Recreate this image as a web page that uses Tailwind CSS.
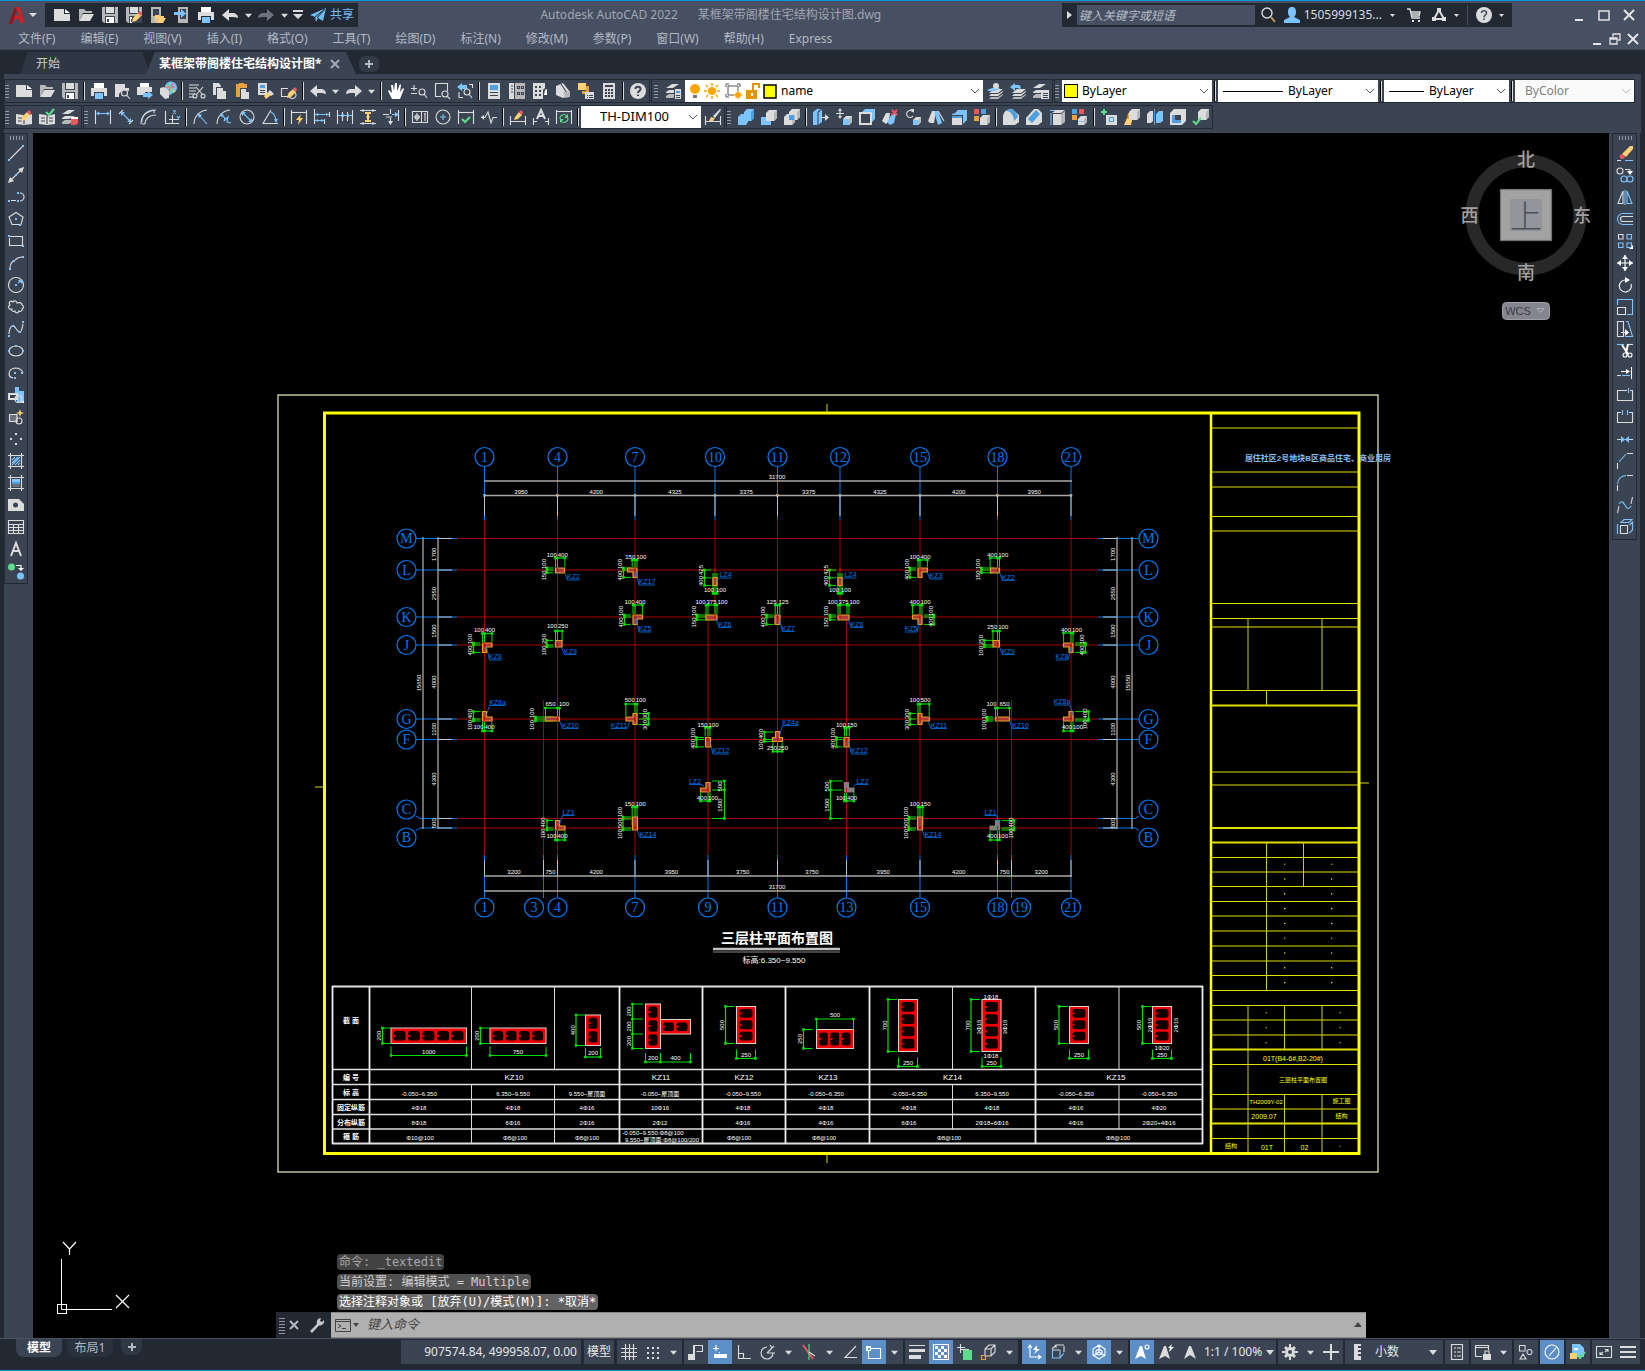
<!DOCTYPE html>
<html lang="zh-CN">
<head>
    <meta charset="UTF-8">
    <meta name="viewport" content="width=device-width, initial-scale=1.0">
    <title>Autodesk AutoCAD 2022 - 某框架带阁楼住宅结构设计图.dwg</title>
    <script src="https://cdn.jsdelivr.net/npm/@tailwindcss/browser@4"></script>
</head>
<body class="min-h-screen flex flex-col bg-[#222933] text-[#b4bac4] text-xs font-['Noto_Sans','Noto_Sans_CJK_SC',sans-serif] border-y border-[#0a96d9] overflow-x-hidden">

    <!-- title bar -->
    <header class="bg-[#474f62] border-b border-[#3b4453]">
        <div class="h-[26px] flex items-end">
            <button aria-label="应用程序菜单" class="w-[45px] h-6 flex items-center pl-[9px] gap-1">
                <svg class="w-4 h-[17px]" viewBox="0 0 16 17"><path fill="#c8242b" d="M0 17L6 0H11L16 16H11L10 12L5 13L3 17ZM6 9L10 8L8 3Z"/><path fill="#8e161b" d="M6 0L0 17H3L8 3Z"/></svg>
                <svg class="w-2 h-2" viewBox="0 0 8 8"><path fill="#ddd" d="M0 2H8L4 6Z"/></svg>
            </button>
            <div class="h-6 bg-[#222933] flex items-center pl-[5px] pr-[4px]">
                <div class="flex" data-tools="new open save saveas mopen msave print undo v redooff v" data-size="qat"></div>
                <button aria-label="自定义" class="w-4 h-6 flex items-center justify-center"><svg class="w-2.5 h-2.5" viewBox="0 0 10 10"><path fill="#dcdcdc" d="M0 0H10V2H0ZM0 4H10L5 9Z"/></svg></button>
                <button class="flex items-center gap-1 pl-1 text-[#6fbcf5]">
                    <svg class="w-4 h-4" viewBox="0 0 16 16"><path fill="#6fbcf5" d="M0 8L16 1L13 14L8 11L6 15L5 10Z"/><path stroke="#222933" fill="none" d="M5 10L15 2L7 11"/></svg>共享
                </button>
            </div>
            <div class="flex-1 h-6 flex items-center justify-center gap-5 text-[#a1a7b2] pl-0.5"><span>Autodesk AutoCAD 2022</span><span>某框架带阁楼住宅结构设计图.dwg</span></div>
            <div class="h-6 bg-[#222933] flex items-center text-[#d8dbe0]">
                <svg class="w-[15px] h-3 px-[4px]" viewBox="0 0 7 12"><path fill="#dcdcdc" d="M1 2L6 6L1 10Z"/></svg>
                <input aria-label="搜索" placeholder="键入关键字或短语" class="w-[178px] h-5 px-0.5 bg-[#474f62] italic placeholder-[#b9bec8] outline-none">
                <button aria-label="搜索按钮" class="w-[26px] flex justify-center"><svg class="w-4 h-4" viewBox="0 0 16 16"><circle cx="7" cy="6" r="5" fill="none" stroke="#dcdcdc" stroke-width="1.4"/><path stroke="#c89a5a" stroke-width="2" d="M11 10L15 15"/></svg></button>
                <button class="flex items-center gap-1 pl-[3px]"><svg class="w-4 h-4" viewBox="0 0 16 16"><path fill="#7cc4ff" d="M8 0C11 0 12 2 12 5C12 8 11 9 10 10L16 13V16H0V13L6 10C5 9 4 8 4 5C4 2 5 0 8 0Z"/></svg>1505999135...<svg class="w-3 h-2" viewBox="0 0 12 8"><path fill="#dcdcdc" d="M4 3H9L6.500 6Z"/></svg></button>
                <button aria-label="购物车" class="w-[26px] flex justify-end pr-[2px]"><svg class="w-4 h-4" viewBox="0 0 16 16"><path fill="none" stroke="#dcdcdc" stroke-width="1.4" d="M1 2H4L6 11H14M5 5H14L13 9H6M5 7H13"/><path fill="#dcdcdc" d="M6 13H8V15H6ZM12 13H14V15H12Z"/></svg></button>
                <button aria-label="Autodesk App" class="flex items-center pl-[7px]"><svg class="w-4 h-4" viewBox="0 0 16 16"><path fill="none" stroke="#dcdcdc" stroke-width="2" d="M8 3L3 12H13Z"/><path fill="#dcdcdc" d="M6 1H10V5H6ZM1 10H5V14H1ZM11 10H15V14H11Z"/></svg><svg class="w-3 h-2 ml-1" viewBox="0 0 12 8"><path fill="#dcdcdc" d="M3 3H8L5.500 6Z"/></svg></button>
                <span class="w-px h-5 bg-[#474f62] ml-1"></span>
                <button aria-label="帮助" class="flex items-center pl-2 pr-1"><svg class="w-4 h-4" viewBox="0 0 16 16"><circle cx="8" cy="8" r="8" fill="#dcdcdc"/><path fill="none" stroke="#474f62" stroke-width="1.600" d="M5.500 6C5.500 3 10.500 3 10.500 6C10.500 8 8 8 8 10.500M8 11.500V13"/></svg><svg class="w-3 h-2 ml-1" viewBox="0 0 12 8"><path fill="#dcdcdc" d="M3 3H8L5.500 6Z"/></svg></button>
            </div>
            <div class="h-6 flex items-center pl-[54px] pr-1">
                <button aria-label="最小化" class="w-[25px] h-4 flex items-center justify-center"><svg class="w-3 h-3" viewBox="0 0 12 12"><path fill="#e4e4e4" d="M2 10H10V12H2Z"/></svg></button>
                <button aria-label="最大化" class="w-[25px] h-4 flex items-center justify-center"><svg class="w-3 h-3" viewBox="0 0 12 12"><path fill="none" stroke="#e4e4e4" stroke-width="1.500" d="M1 2H11V11H1Z"/></svg></button>
                <button aria-label="关闭" class="w-[25px] h-4 flex items-center justify-center"><svg class="w-3 h-3" viewBox="0 0 12 12"><path stroke="#e4e4e4" stroke-width="2" d="M1 1L11 11M11 1L1 11"/></svg></button>
            </div>
        </div>
        <nav class="h-[22px] flex items-center gap-[25px] pl-[18px] pr-1.5 pt-0.5">
            <a href="#">文件(F)</a><a href="#">编辑(E)</a><a href="#">视图(V)</a><a href="#">插入(I)</a><a href="#">格式(O)</a><a href="#">工具(T)</a><a href="#">绘图(D)</a><a href="#">标注(N)</a><a href="#">修改(M)</a><a href="#">参数(P)</a><a href="#">窗口(W)</a><a href="#">帮助(H)</a><a href="#">Express</a>
            <div class="ml-auto flex gap-1.5">
                <button aria-label="最小化图形"><svg class="w-3 h-3" viewBox="0 0 12 12"><path fill="#e4e4e4" d="M2 10H10V12H2Z"/></svg></button>
                <button aria-label="还原图形"><svg class="w-3 h-3" viewBox="0 0 12 12"><path fill="none" stroke="#e4e4e4" stroke-width="1.300" d="M4 4V1H11V7H9M1 5H8V11H1ZM1 6H8"/></svg></button>
                <button aria-label="关闭图形"><svg class="w-3 h-3" viewBox="0 0 12 12"><path stroke="#e4e4e4" stroke-width="2" d="M1 1L11 11M11 1L1 11"/></svg></button>
            </div>
        </nav>
    </header>

    <!-- file tabs -->
    <div class="h-6 flex items-end pl-5 shrink-0">
        <button class="w-[130px] h-[22px] bg-[#2f3744] text-left pl-4 pt-0.5 text-[#c9cdd4] [clip-path:polygon(8px_0,122px_0,130px_100%,0_100%)]">开始</button>
        <div class="-ml-1 w-[210px] h-[22px] bg-[#3b4453] flex items-center pl-[13px] pt-0.5 gap-2 text-white font-bold [clip-path:polygon(9px_0,200px_0,210px_100%,0_100%)]">
            <button class="whitespace-nowrap">某框架带阁楼住宅结构设计图*</button>
            <button aria-label="关闭选项卡"><svg class="w-2.5 h-2.5" viewBox="0 0 10 10"><path stroke="#a5abb5" stroke-width="2" d="M1 1L9 9M9 1L1 9"/></svg></button>
        </div>
        <button aria-label="新图形" class="ml-[3px] mb-0.5 w-5 h-4 rounded-md bg-[#323a47] flex items-center justify-center"><svg class="w-2 h-2" viewBox="0 0 8 8"><path fill="#b4bac4" d="M3 0H5V3H8V5H5V8H3V5H0V3H3Z"/></svg></button>
    </div>

    <!-- docked toolbars -->
    <div class="bg-[#3b4453] mx-1 pt-[5px] pb-1 flex flex-col gap-0.5 shrink-0">
        <div class="h-6 flex gap-px pr-[6px]">
            <div class="flex items-center border border-[#222933]">
                <span class="w-1 h-[15px] mr-[3px] bg-[radial-gradient(#9aa0aa_35%,transparent_40%)] bg-[length:2px_3px]"></span>
                <div class="flex" data-tools="new open save | print preview publish globe | cut copy paste match bedit | undo v redo v | pan zoomrt zoomwin zoomprev | props dcenter palette sheet markup calc | help"></div>
            </div>
            <div class="flex items-center border border-[#222933] pl-0.5">
                <span class="w-1 h-[15px] mr-1 bg-[radial-gradient(#9aa0aa_35%,transparent_40%)] bg-[length:2px_3px]"></span>
                <div class="flex" data-tools="layers"></div>
                <div class="relative w-[298px] h-[22px] bg-white flex items-center text-black pl-1">
                    <svg class="w-[92px] h-4 shrink-0" viewBox="0 0 92 16"><circle cx="6" cy="6" r="5" fill="#ffa500"/><path fill="#777" d="M4 12H8V15H4Z"/><circle cx="23" cy="8" r="4" fill="#ffa500"/><path stroke="#ffa500" stroke-width="1.500" d="M23 0V3M23 13V16M15 8H18M28 8H31M17 2L19 4M27 12L29 14M29 2L27 4M19 12L17 14"/><path fill="none" stroke="#555" d="M39 3H49V8M39 3V12H45M37 1H40M37 1V4M48 1H51V4M37 11V14H40"/><circle cx="49" cy="12" r="3" fill="#ffa500"/><path stroke="#ffa500" d="M49 7V17M44 12H54"/><path fill="#e69500" d="M57 7H68V16H57Z"/><path fill="none" stroke="#e69500" stroke-width="2" d="M64 7V1H70V5"/><path fill="#fff" d="M62 10H64V13H62Z"/><path fill="#ff0" stroke="#000" stroke-width="1.500" d="M75 2H87V15H75Z"/></svg>
                    <select aria-label="图层" class="flex-1 appearance-none bg-transparent outline-none"><option>name</option></select>
                    <svg class="absolute right-1 w-2 h-2 pointer-events-none" viewBox="0 0 8 8"><path fill="none" stroke="#555" d="M0 2L4 6L8 2"/></svg>
                </div>
                <div class="flex" data-tools="laycur layprev laystate"></div>
            </div>
            <div class="flex-1 flex items-center border border-[#222933]">
                <span class="w-1 h-[15px] mr-[3px] bg-[radial-gradient(#9aa0aa_35%,transparent_40%)] bg-[length:2px_3px]"></span>
                <div class="relative w-[150px] h-[22px] bg-white flex items-center text-black pl-0.5">
                    <span class="w-3.5 h-3.5 bg-[#ff0] border border-black"></span>
                    <select aria-label="颜色" class="flex-1 appearance-none bg-transparent outline-none pl-1"><option>ByLayer</option></select>
                    <svg class="absolute right-1 w-2 h-2 pointer-events-none" viewBox="0 0 8 8"><path fill="none" stroke="#555" d="M0 2L4 6L8 2"/></svg>
                </div>
                <span class="w-px h-5 mx-[2px] bg-[#dcdcdc] border-l border-black box-content"></span>
                <div class="relative w-[160px] h-[22px] bg-white flex items-center text-black pl-[5px]">
                    <span class="w-[60px] h-px bg-black"></span>
                    <select aria-label="线型" class="flex-1 appearance-none bg-transparent outline-none pl-[5px]"><option>ByLayer</option></select>
                    <svg class="absolute right-1 w-2 h-2 pointer-events-none" viewBox="0 0 8 8"><path fill="none" stroke="#555" d="M0 2L4 6L8 2"/></svg>
                </div>
                <span class="w-px h-5 mx-[2px] bg-[#dcdcdc] border-l border-black box-content"></span>
                <div class="relative w-[125px] h-[22px] bg-white flex items-center text-black pl-[5px]">
                    <span class="w-[35px] h-px bg-black"></span>
                    <select aria-label="线宽" class="flex-1 appearance-none bg-transparent outline-none pl-[5px]"><option>ByLayer</option></select>
                    <svg class="absolute right-1 w-2 h-2 pointer-events-none" viewBox="0 0 8 8"><path fill="none" stroke="#555" d="M0 2L4 6L8 2"/></svg>
                </div>
                <span class="w-px h-5 mx-[2px] bg-[#dcdcdc] border-l border-black box-content"></span>
                <div class="relative flex-1 h-[22px] bg-[#fafafa] flex items-center">
                    <select aria-label="打印样式" disabled class="flex-1 appearance-none bg-transparent outline-none pl-2.5 text-[#808080]"><option>ByColor</option></select>
                    <svg class="absolute right-1 w-2 h-2 pointer-events-none" viewBox="0 0 8 8"><path fill="none" stroke="#bbb" d="M0 2L4 6L8 2"/></svg>
                </div>
            </div>
        </div>
        <div class="h-6 flex gap-px">
            <div class="flex items-center border border-[#222933]">
                <span class="w-1 h-[15px] mr-[3px] bg-[radial-gradient(#9aa0aa_35%,transparent_40%)] bg-[length:2px_3px]"></span>
                <div class="flex" data-tools="refedit refsave erasel"></div>
            </div>
            <div class="flex items-center border border-[#222933]">
                <span class="w-1 h-[15px] mr-[3px] bg-[radial-gradient(#9aa0aa_35%,transparent_40%)] bg-[length:2px_3px]"></span>
                <div class="flex" data-tools="dlin dali darc dord | drad djog ddia dang | qdim dbase dcont dspace dbreak | tol cmark inspect jogl | dedit dtedit dupd |"></div>
                <div class="relative w-[120px] h-[22px] bg-white flex items-center text-black">
                    <select aria-label="标注样式" class="w-full appearance-none bg-transparent outline-none pl-[19px] text-[13px]"><option>TH-DIM100</option></select>
                    <svg class="absolute right-1 w-2 h-2 pointer-events-none" viewBox="0 0 8 8"><path fill="none" stroke="#555" d="M0 2L4 6L8 2"/></svg>
                </div>
                <div class="flex" data-tools="dstyle"></div>
            </div>
            <div class="flex items-center border border-[#222933]">
                <span class="w-1 h-[15px] mr-[3px] bg-[radial-gradient(#9aa0aa_35%,transparent_40%)] bg-[length:2px_3px]"></span>
                <div class="flex" data-tools="union subtract intersect | extrude fmove foffset fdel frot taper fcopy fcolor | filletE chamE copyE colorE | imprint clean separate shell check"></div>
            </div>
        </div>
    </div>

    <!-- drawing area between the two tool palettes -->
    <main class="flex-1 flex mx-1 bg-[#3b4453] border-r border-[#222933]">
        <div class="w-[29px] shrink-0">
            <div class="w-6 border border-[#222933] flex flex-col items-center pt-0.5 pb-px">
                <span class="h-1 w-3.5 mb-[2px] bg-[radial-gradient(#9aa0aa_35%,transparent_40%)] bg-[length:3px_2px]"></span>
                <div class="flex flex-col" data-size="side" data-tools="line xline pline polygon rect arc circle cloud spline ellipse elarc insert block point hatch grad region table text add"></div>
            </div>
        </div>
        <div class="relative flex-1 bg-black overflow-hidden">
            <svg id="drawing" class="absolute inset-0 w-full h-full" viewBox="33 133 1576 1205" font-family="Liberation Sans, Noto Sans CJK SC, sans-serif"></svg>
            <div class="absolute left-[304px] bottom-[28px] flex flex-col items-start gap-1 text-xs font-['DejaVu_Sans_Mono','Noto_Sans_CJK_SC',monospace]">
                <p class="h-4 leading-4 px-0.5 rounded-sm bg-[#424242] text-[#a9a9a9] whitespace-pre">命令: _textedit</p>
                <p class="h-4 leading-4 px-0.5 rounded-sm bg-[#505050] text-[#cfcfcf] whitespace-pre">当前设置: 编辑模式 = Multiple</p>
                <p class="h-4 leading-4 px-0.5 rounded-sm bg-[#636363] text-white whitespace-pre">选择注释对象或 [放弃(U)/模式(M)]: *取消*</p>
            </div>
            <div class="absolute inset-x-[243px] bottom-0 h-[26px] flex items-center bg-[#222933]">
                <span class="w-1.5 h-[17px] ml-[3px] mr-1 bg-[radial-gradient(#9aa0aa_35%,transparent_40%)] bg-[length:2px_3px]"></span>
                <button aria-label="关闭命令行"><svg class="w-2.5 h-2.5" viewBox="0 0 10 10"><path stroke="#b4bac4" stroke-width="2" d="M1 1L9 9M9 1L1 9"/></svg></button>
                <button aria-label="自定义命令行" class="ml-2.5 mr-1.5"><svg class="w-4 h-4" viewBox="0 0 16 16"><path fill="#c4c8ce" d="M1 14L8 7C7 4 9 1 12 1L11 4L13 5L15 3C16 6 13 9 10 8.500L3 16Z"/></svg></button>
                <label class="flex-1 h-full flex items-center bg-[#b0b0b0] border-y border-[#888] pl-1 pr-1 gap-1 text-[#333]">
                    <svg class="w-6 h-4 shrink-0" viewBox="0 0 24 16"><path fill="none" stroke="#444" d="M.5 2.500H15.500V14.500H.5ZM.5 4.500H15.500M3 7L6 9L3 11M7 11.500H11"/><path fill="#444" d="M18 6H24L21 10Z"/></svg>
                    <input aria-label="命令" placeholder="键入命令" class="flex-1 bg-transparent outline-none italic text-[13px] placeholder-[#444] pl-1">
                    <svg class="w-2 h-2" viewBox="0 0 8 8"><path fill="#444" d="M0 6H8L4 1Z"/></svg>
                </label>
            </div>
        </div>
        <div class="w-[31px] shrink-0 pl-[3px]">
            <div class="w-[25px] border border-[#222933] flex flex-col items-center pt-0.5 pb-px">
                <span class="h-1 w-3.5 mb-[2px] bg-[radial-gradient(#9aa0aa_35%,transparent_40%)] bg-[length:3px_2px]"></span>
                <div class="flex flex-col" data-size="side" data-tools="erase copyobj mirror offset array move rotate scale stretch trim extend breakpt break join chamfer fillet blend explode"></div>
            </div>
        </div>
    </main>

    <!-- layout tabs and status bar -->
    <footer class="h-8 shrink-0 flex items-start border-t border-[#4a5160] pr-[5px]">
        <button class="ml-4 w-[46px] h-[18px] rounded-b-lg bg-[#3b4453] text-white font-bold">模型</button>
        <button class="ml-[5px] w-[46px] h-[18px] rounded-b-lg bg-[#29313c]">布局1</button>
        <button aria-label="新建布局" class="ml-2 w-[21px] h-4 rounded-b-lg bg-[#2f3744] flex items-center justify-center"><svg class="w-2 h-2" viewBox="0 0 8 8"><path fill="#b4bac4" d="M3 0H5V3H8V5H5V8H3V5H0V3H3Z"/></svg></button>
        <div class="ml-auto mt-px flex h-6 gap-[2px] text-[#e6e6e6]">
            <span class="bg-[#3b4453] w-[180px] pr-1 text-right leading-6">907574.84, 499958.07, 0.00</span>
            <button class="bg-[#3b4453] w-[30px] mx-px">模型</button>
            <div class="bg-[#3b4453] flex" data-size="status" data-tools="sgrid sdots v"></div>
            <div class="bg-[#3b4453] flex" data-size="status" data-tools="infer *dyn ortho polar v iso v angle *osnap v"></div>
            <div class="bg-[#3b4453] flex mr-0.5" data-size="status" data-tools="lwt *transp cycle osnap3 v"></div>
            <div class="bg-[#3b4453] flex" data-size="status" data-tools="*ducs filter v *gizmo v"></div>
            <div class="bg-[#3b4453] flex" data-size="status" data-tools="*ann1 ann2 ann3"></div>
            <button class="bg-[#3b4453] -ml-[2px] w-[74px] flex items-center justify-center gap-1 whitespace-nowrap">1:1 / 100%<svg class="w-2 h-2" viewBox="0 0 8 8"><path fill="#dcdcdc" d="M0 2H8L4 7Z"/></svg></button>
            <div class="bg-[#3b4453] flex" data-size="status" data-tools="gear v plus"></div>
            <button class="bg-[#3b4453] w-[98px] flex items-center pl-1"><svg class="w-4 h-4 mr-2.5" viewBox="0 0 16 16"><path fill="#dcdcdc" d="M5 0H12V2H9V4H12V6H9V8H12V10H9V12H12V14H12V16H5Z"/></svg>小数<svg class="ml-auto mr-1.5 w-2 h-2" viewBox="0 0 8 8"><path fill="#dcdcdc" d="M0 2H8L4 7Z"/></svg></button>
            <div class="bg-[#3b4453] flex" data-size="status" data-tools="qprop"></div>
            <div class="bg-[#3b4453] flex" data-size="status" data-tools="lock v"></div>
            <div class="bg-[#3b4453] flex" data-size="status" data-tools="isolate"></div>
            <div class="bg-[#3b4453] flex" data-size="status" data-tools="*perf"></div>
            <div class="bg-[#3b4453] flex" data-size="status" data-tools="cad"></div>
            <div class="bg-[#3b4453] flex" data-size="status" data-tools="full menu"></div>
        </div>
    </footer>

    <script>
        // F = fill, S = 1px stroke, T = 2px stroke; second letter picks the colour
        const COLORS = { w: "#dcdcdc", W: "#ffffff", x: "#b8b8b8", b: "#7cc4ff", B: "#4d9fe0", y: "#ffcf70", r: "#f0555c", g: "#5fdc8b", k: "#3b4453", d: "#6b717c", o: "#e8a040" };
        const floppy = "Fx M0 0H16V16H2L0 14Z|Fk M3 0H13V7H3Z|Fw M4 0H12V6H4Z|Fk M3 9H13V16H3Z|FW M4 10H12V16H4Z|Fk M5 12H7V15H5Z";
        const pencil = "|Fy M6 15L7 11L12 6L15 9L10 14Z|Fr M12 6L14 4L16 6L15 9Z";
        const stack = "Fw M0 5L6 1H13L7 5Z|Fw M0 9L3 7H13L7 10H0Z|Fx M0 13L3 11H13L7 15H0Z";
        const stackR = "Fw M2 10L7 6H16L11 10Z|Fw M2 13L4 11H11L16 8V9L11 13Z|Fx M2 16L4 14H11L16 11V12L11 16Z";
        const dim = "Sw M.5 1V15M15.500 1V15";
        const box = (x, y, s, c) => `F${c} M${x} ${y + 3}L${x + 3} ${y}H${x + s}V${y + s - 3}L${x + s - 3} ${y + s}H${x}Z|Fx M${x + s - 3} ${y + 3}L${x + s} ${y}V${y + s - 3}L${x + s - 3} ${y + s}Z`;
        const ICONS = {
            new: "Fw M0 2H10V7H16V14H0Z|FW M11 2L16 6H11Z",
            open: "Fx M1 14V2H6L8 4H14V6H5Z|Fw M5 7H16L12 14H1Z",
            save: floppy, saveas: floppy + "|Fk M6 16V9H16V16Z" + pencil,
            mopen: "Fx M1 0H11V16H1Z|Fk M3 2H9V9H3Z|Fy M5 15V8H9L10 9H14V11H8Z|Fy M9 11H16L13 16H6Z",
            msave: "Fx M4 0H14V16H4Z|Fk M6 2H12V12H6Z|Fb M0 5H7V2L12 6.500L7 11V8H0Z",
            print: "FW M3 0H13V5H3Z|Fw M0 5H16V13H13V9H3V13H0Z|Fb M4 10H12V16H4Z",
            preview: "Fw M1 1H11V5H15V8L9 7L5 11V14H1Z|Sw M13.500 10A3 3 0 1 1 7.500 10A3 3 0 1 1 13.500 10M12.500 12L16 16",
            publish: "FW M3 0H12V4H3Z|Fw M0 4H15V9H8V12H0Z|Fb M6 10H11V8L16 12L11 16V14H6Z",
            globe: "Fb M5 5A6 6 0 1 1 15 9L8 13Z|Sy M6 3L15 9|Sr M13 0L8 9M15 4H6|Sg M8 1Q14 6 11 11|Fw M0 5L4 4L9 8V15L5 16L0 11Z",
            cut: "Sw M0 2H10M0 5H7M0 8H7M0 11H6|Sw M0 14H5|Sw M7 4L14 12M14 4L7 12|Sw M8 13A2 2 0 1 1 4 13A2 2 0 1 1 8 13M16 13A2 2 0 1 1 12 13A2 2 0 1 1 16 13",
            copy: "Fw M1 0H7L9 3V4H4V12H1Z|Fw M5 5H11V8H14V16H5Z",
            paste: "Fo M1 1H4V0H9V1H12V5H5V14H1Z|Fw M6 6H11V9H14V16H6Z",
            match: "Fw M0 0H9V12H0Z|FB M2 2H7V5H2Z|Fk M2 7H7V8H2ZM2 9H7V10H2Z|Fy M8 16L6 13L10 9L13 12Z|Fw M10 9L12 7L16 11L13 13Z",
            bedit: "Sw M0 5.500H7M.5 5V13.500H8|Sw M15 12A3.500 3.500 0 1 1 8 12A3.500 3.500 0 1 1 15 12" + pencil,
            undo: "Fw M0 8L7 2V6H10C14 6 16 8 16 11C14 10 12 10 10 10H7V14Z",
            redo: "Fw M16 8L9 2V6H6C2 6 0 8 0 11C2 10 4 10 6 10H9V14Z",
            redooff: "Fd M16 8L9 2V6H6C2 6 0 8 0 11C2 10 4 10 6 10H9V14Z",
            pan: "FW M4 16L0 8L1 7L4 10L3 2L5 2L6 8L7 0H9L9 8L12 1L13 2L12 9L15 5L16 6L12 16Z",
            zoomrt: "Sw M0 5.500H6M3 2V8M0 10.500H6|Sw M14 9A3 3 0 1 1 8 9A3 3 0 1 1 14 9M13 11L16 15",
            zoomwin: "Sw M1 .5H13.500V8M7 13.500H1.500V0|Sw M14 11A3 3 0 1 1 8 11A3 3 0 1 1 14 11M13 13L16 16",
            zoomprev: "Fb M0 4L5 0V2H10V6H5V8Z|Sw M12 1.500H15.500V5M2 9V14.500H6|Sw M13 9A3 3 0 1 1 7 9A3 3 0 1 1 13 9M12 11L15 15",
            props: "Fw M2 0H14V16H2Z|FB M4 2H12V7H4Z|Fk M4 9H12V10H4ZM4 12H12V13H4Z",
            dcenter: "Fw M0 0H5V16H0Z|Fx M6 0H16V16H6Z|Sk M2 3H4M2 6H4M2 9H4M8.500 3.500H10.500V5.500H8.500ZM12.500 3.500H14.500V5.500H12.500ZM8.500 9.500H10.500V11.500H8.500ZM12.500 9.500H14.500V11.500H12.500Z",
            palette: "Fw M1 0H13V5L11 7V16H1Z|Fk M3 3H5V5H3ZM7 3H9V5H7ZM3 7H5V9H3ZM7 7H9V9H7ZM3 11H5V13H3ZM7 11H9V13H7Z|FW M13 7L15 6V12H12Z",
            sheet: "Fw M1 3L8 0L15 9V12L8 15L1 12Z|Sk M6 1L14 13M9 10L15 12|Fx M9 10L15 8V14L10 15Z",
            markup: "Fy M0 0H8V7H0Z|Fo M8 3H11V11H4V8H8Z|Fw M7 9H16V16H7Z|Sk M9 12.500H10M11 12.500H15M9 14.500H10M11 14.500H15",
            calc: "Fw M2 0H14V16H2Z|Fk M4 2H12V4H4ZM4 6H6V8H4ZM7 6H9V8H7ZM10 6H12V8H10ZM4 9H6V11H4ZM7 9H9V11H7ZM10 9H12V11H10ZM4 12H6V14H4ZM7 12H9V14H7ZM10 12H12V14H10Z",
            help: "Fw M16 8A8 8 0 1 1 0 8A8 8 0 1 1 16 8|Tk M5.500 6C5.500 3 10.500 3 10.500 6C10.500 8 8 8 8 10M8 11.500V13",
            layers: stack + "|Fk M8 6H16V16H8Z|Fw M9 6H15V16H9Z|FB M10 8H14V10H10Z|Sk M10 12.500H14M10 14.500H14",
            laycur: stackR + "|Fb M0 7L5 5H13L9 8H2Z|Fw M12 3A3 3 0 1 1 6 3A3 3 0 1 1 12 3",
            layprev: stackR + "|Fb M0 4L5 0V2H9C11 3 11 5 10 7C9 5 8 5 5 5V8Z",
            laystate: stack + "|Fk M8 6H16V16H8Z|Fw M8 7H16V16H8Z|Sk M10 10.500H15M10 12.500H15M10 14.500H15",
            refedit: "Fw M0 5L7 6L8 7L16 5V15L8 16L0 15Z|Sk M8 7V15M2 9H6M2 12H6|Fy M5 12L6 8L11 3L14 6L9 11Z|Fr M11 3L13 1L15 3L14 6Z",
            refsave: "Fw M0 5L7 6L8 7L16 5V15L8 16L0 15Z|Sk M8 7V15M2 9H6M2 12H6M10 9H14M10 12H14|Tg M7 3L10 6L15 0",
            erasel: stack + "|Fr M9 9L10 8H16V14L14 16H9Z|FW M9 8H16V10H9Z",
            dlin: dim + "|Sb M2 4.500H14|Fb M1 4.500L4 2.500V6.500ZM15 4.500L12 2.500V6.500Z",
            dali: "Sw M1 5L5 1M11 15L15 11|Sb M3 3L13 13|Fb M3 3H7L3 7ZM13 13V9L9 13Z",
            darc: "Sw M1 15L4 15M13 1V4M4 15C4 10 8 6 15 6|Sb M1 13C1 6 6 1 13 1|Sw M0 15C0 6 6 2 15 1",
            dord: "Sw M1.500 2V14.500H15M5 10.500H15M8.500 6V14|Sb M9 1L12 5M12 1L9 5M13 7L14.500 9L16 7M14.500 9V11",
            drad: "Sw M1 15C1 8 6 2 14 1|Sb M6 6L14 15|Fb M4 4L9 6L6 9Z",
            djog: "Sw M1 15C1 8 6 2 14 1|Sb M5 6L9 9L8 12L12 8L11 13L15 14|Fb M4 4L8 6L5 8Z",
            ddia: "Sw M15 8A7 7 0 1 1 1 8A7 7 0 1 1 15 8|Sb M3 3L13 13|Fb M3 3H7L3 7ZM13 13V9L9 13Z",
            dang: "Sw M9 1L1 14.500H16|Sb M9 3C13 5 14 9 14 13|Fb M14 14L12 10H16Z",
            qdim: dim + "|Sw M1 3.500H15|Fy M10 5L5 11H8L7 16L12 9H9Z",
            dbase: "Sw M.5 0V15M15.500 3V8M10.500 10V15|Sb M1 5.500H15M1 11.500H10|Fb M1 5.500L4 4V7ZM15 5.500L12 4V7ZM1 11.500L4 10V13ZM10 11.500L7 10V13Z",
            dcont: "Sw M.5 1V15M5.500 3V12M10.500 3V12M15.500 1V15|Sb M1 6.500H15|Fb M3 6.500L5 5V8ZM8 6.500L6 5V8ZM13 6.500L11 5V8Z",
            dspace: "Sw M0 1.500H16M0 14.500H16M3 0V3M13 0V3M3 13V16M13 13V16|Ty M8 3V13M5 4H11M5 12H11|Sy M6 8H10",
            dbreak: "Sw M0 5.500H6M3 8H9M7.500 0V5M7.500 9V15M15.500 1V12|Sb M9 5.500H15|Fb M16 5.500L12 3V8Z|Fw M7.500 16L5 12H10Z",
            tol: "Sw M.5 2.500H15.500V13.500H.5ZM9.500 2V14M5 4V12M2 8H8M12 5L13 4.500V12|Sw M7 8A2 2 0 1 1 3 8A2 2 0 1 1 7 8",
            cmark: "Sw M15 8A7 7 0 1 1 1 8A7 7 0 1 1 15 8|Sb M8 5V11M5 8H11",
            inspect: dim + "|Sw M1 3.500H15|Tg M4 10L7 13L12 8",
            jogl: "Sw M0 8.500H4L7 3L10 14L12 8.500H16|Fw M0 8L3 6V11Z",
            dedit: "Sw M.5 7V16M15.500 7V16M1 12.500H15|Fk M4 14V4H13V11H4Z|Fy M4 11L5 8L9 3L12 6L8 10Z|Fr M9 3L11 1L13 3L12 6Z",
            dtedit: "Sw M.5 9V16M15.500 9V16M1 12.500H15|Fk M4 10H12V13H4Z|Tw M4 10L8 1L12 10M6 7H10",
            dupd: dim + "|Sw M1 2.500H15|Sg M4 10A4 4 0 0 1 11 7M12 9A4 4 0 0 1 5 12|Fg M12 5V9H8ZM4 14V10H8Z",
            dstyle: "Sw M.5 7V16M15.500 7V16M1 12.500H15|Fy M4 12L6 8L10 9L8 12Z|Fw M8 7L15 0L16 1L10 9Z",
            union: "Fb M6 3L9 0H16V9L13 12H10V13L8 16H0V8L3 5H6Z|FB M13 3L16 0V9L13 12Z",
            subtract: "Fb M0 8H5V12H10V16H0Z|" + box(5, 1, 11, "w"),
            intersect: box(5, 0, 11, "w") + "|" + box(0, 5, 11, "w") + "|FB M5 6H10V11H5Z",
            extrude: "Fb M0 3L4 0H9V13L5 16H0Z|Sk M5 3V16M5 3L9 0|Sw M8 8.500H14|Fw M16 8.500L12 5V12Z",
            fmove: "Sw M0 4.500H8M4 .5V8.500|Fw M4 -1L6 2H2ZM4 10L6 7H2Z|" + box(7, 7, 9, "w") + "|Fb M7 10H13V16H7Z",
            foffset: "Fb M3 3L6 0H16V10L13 13V3Z|Tw M1 4H12V15H1Z",
            fdel: "Fw M0 12L4 4H8L7 12L4 15Z|Fb M5 13L10 5H14L12 14L8 16Z|Tr M10 1L15 6M15 1L10 6",
            frot: "Sw M8 3A3.500 3.500 0 1 0 8 7|Fw M5 0H9V4Z|" + box(8, 8, 8, "w") + "|Fb M8 11H13V16H8Z",
            taper: "Fw M0 12L4 2H8L6 14H2Z|Fb M6 2H10L14 14L10 16Z|Sw M10 2L16 12",
            fcopy: "Fb M4 4L7 1H16V11L12 15V6H1V5Z|Fw M1 7H11V16H1Z|FB M1 7H11V9H1Z",
            fcolor: "Fr M0 0H5V5H0Z|Fo M0 7H5V12H0Z|FB M7 0H12V5H7Z|" + box(6, 6, 10, "w"),
            filletE: "Fw M0 7C1 2 4 0 9 0L16 6V13L12 16H0Z|FB M3 2C8 2 11 7 11 12L15 8C14 4 11 0 7 0Z",
            chamE: "Fw M0 9L8 0H12L16 4V13L12 16H0Z|FB M2 10L10 1L14 5L6 14Z",
            copyE: "Fw M4 5H12V16H4Z|Fx M12 5L16 2V13L12 16Z|Sb M2 4V16M1 1.500H7|Fw M3 4L7 1H16L12 4Z",
            colorE: "Fr M7 0H12V5H7Z|Fo M0 6H5V11H0Z|FB M0 0H5V5H0Z|" + box(6, 7, 9, "w") + "|Fb M6 12H12V13H6Z",
            imprint: "Tg M3 0V6M0 3H6|Fw M5 6H16V16H5Z|SB M8.500 8.500H12.500V12.500H8.500Z",
            clean: box(5, 0, 11, "w") + "|Fy M0 16L3 9L8 11L7 16Z|Fo M4 4H5V10H3Z",
            separate: "Fw M0 5L3 2H6V12L4 14H0Z|Fb M9 5L12 2H16V12L13 14H9Z|SB M7.500 0V16",
            shell: "Fw M0 4L4 0H16V12L12 16H0Z|Fk M2 6H11V14H2Z|FB M2 6H5V11H11V14H2Z",
            check: box(5, 0, 11, "w") + "|Tg M0 12L3 15L8 9",
            line: "Sw M2 14L14 2|Fb M0 14H2V16H0ZM14 0H16V2H14Z",
            xline: "Sw M1 15L15 1|Fw M0 16L2 10L6 14ZM16 0L10 2L14 6Z|Fb M7 7H9V9H7Z",
            pline: "Sw M3 11.500H8M12 4A4 4 0 0 1 12 12|Fb M0 11H2V13H0ZM9 11H11V13H9ZM9 3H11V5H9Z",
            polygon: "Sw M8 1.500L15 6L13 13.500H4L1 6Z|Fb M7 7H9V9H7ZM11 13H13V15H11Z",
            rect: "Sw M2 3.500H14.500V12M14 12.500H1.500V5|Fb M0 2H2V4H0ZM14 12H16V14H14Z",
            arc: "Sw M2 13C2 10 3 8 5 6M7 5C9 3 11 2 14 2|Fb M1 13H3V15H1ZM5 5H7V7H5ZM14 1H16V3H14Z",
            circle: "Sw M15.500 8A7.500 7.500 0 1 1 .5 8A7.500 7.500 0 1 1 15.500 8|Sb M10 6L12 4|Fb M7 7H9V9H7ZM10 3H14V7Z",
            cloud: "Sw M2 10C0 9 0 7 2 6C0 3 3 1 5 3C6 1 9 2 9 4C12 3 14 4 14 6C16 7 16 9 14 10C15 12 12 13 11 12C10 15 7 14 7 12C5 13 3 12 4 10C3 10 2 11 2 10Z",
            spline: "Sw M1 13C1 9 3 5 4 5M6 5C8 7 9 10 11 11M13 10C14 9 14 7 15 3|Fb M0 14H2V16H0ZM4 4H6V6H4ZM11 10H13V12H11ZM14 0H16V2H14Z",
            ellipse: "Sw M15 8A7 5 0 1 1 1 8A7 5 0 1 1 15 8|Fb M0 7H2V9H0ZM14 7H16V9H14ZM7 2H9V4H7Z",
            elarc: "Sw M5 13C-1 12 0 4 7 3C11 3 14 5 15 8|Fb M6 7H8V9H6ZM13 7H15V9H13ZM6 12H8V14H6Z",
            insert: "Fb M7 0H11V4H16V13L13 16H9V6H7Z|FW M13 16L16 13V16Z|Fw M0 6H10V13H0Z|Fk M2 8H8V11H2Z|Sw M14 12A3.500 3.500 0 1 1 7 12A3.500 3.500 0 1 1 14 12",
            block: "Fd M1 5H10V13H1Z|Sw M1.500 5.500H9V12.500H1.500ZM14 12A3 3 0 1 1 8 12A3 3 0 1 1 14 12|Fy M12 0L13 3L16 4L13 5L12 8L11 5L8 4L11 3Z",
            point: "Fw M7 2H9V4H7ZM2 7H4V9H2ZM12 7H14V9H12ZM7 12H9V14H7Z",
            hatch: "Sw M0 2.500H16M0 13.500H16M2.500 0V16M13.500 0V16|Sb M4 7L7 4M4 10L10 4M4 12L12 4M7 12L12 7M10 12L12 10",
            grad: "Sw M0 2.500H16M0 13.500H16M2.500 0V16M13.500 0V16|Fb M4 4H12V8H4Z|FB M4 7H12V9H4Z|Fd M4 9H12V12H4Z",
            region: "Fw M0 2H11L16 7V14H0Z|Fk M10 8A2.500 2.500 0 1 1 5 8A2.500 2.500 0 1 1 10 8",
            table: "Sw M.5 1.500H15.500V14.500H.5ZM0 5.500H16M0 8.500H16M0 11.500H16M5.500 5V15M10.500 5V15",
            text: "Tw M3 15L8 2L13 15M5 10H11",
            add: "Fg M7 4A3.500 3.500 0 1 1 0 4A3.500 3.500 0 1 1 7 4|Fb M16 13A3.500 3.500 0 1 1 9 13A3.500 3.500 0 1 1 16 13|SW M8 2.500H13V6|FW M13 8L10 5H16Z",
            erase: "Fy M5 9L13 1L16 1V4L9 12Z|Fr M3 13A3 3 0 0 1 5 9L8 12A3 3 0 0 1 3 13|Sw M0 15.500H4|Sb M8 15.500H16",
            copyobj: "Sw M6 4A3 3 0 1 1 0 4A3 3 0 1 1 6 4M8 2.500H13V5|FW M13 8L10 4H16Z|Sb M10 12A3 3 0 1 1 4 12A3 3 0 1 1 10 12M16 12A3 3 0 1 1 10 12A3 3 0 1 1 16 12",
            mirror: "Sw M6 2V14.500H1Z|Sb M10 2V14.500H15ZM8 1V16",
            offset: "Sb M16 2.500H6A5.500 5.500 0 0 0 6 13.500H16|Sw M16 5.500H6A2.500 2.500 0 0 0 6 10.500H16",
            array: "Sw M1.500 1.500H6V6H1.500Z|Sb M10 1.500H14.500V6H10ZM1.500 10H6V14.500H1.500ZM10 10H14.500V14.500H10Z|FW M16 12V16H12Z",
            move: "SW M0 8H16M8 0V16|FW M8 0L11 4H5ZM8 16L11 12H5ZM0 8L4 5V11ZM16 8L12 5V11Z",
            rotate: "SW M9 3A6 6 0 1 0 14 7|FW M8 0L13 3L8 6Z",
            scale: "Sb M.5 6V.5H15.500V15.500H10|Sw M.5 8.500H8.500V15.500H.5Z",
            stretch: "Sw M.5 .5H6.500V15.500H.5ZM4 11.500H9|FW M12 11.500L8 8V15Z|Sb M9 .5H11L15.500 15.500H8",
            trim: "Sb M0 1.500H7|Sw M11 1.500H16|TW M5 2L11 11M11 1L9 10|SW M10 12A2 2 0 1 1 6 12A2 2 0 1 1 10 12M15 12A2 2 0 1 1 11 12A2 2 0 1 1 15 12",
            extend: "SW M4 6.500H10M14.500 2V14|FW M13 6.500L9 4V9Z|Sw M0 10.500H4|Sb M5 10.500H13",
            breakpt: "Sw M10 3.500H.5V13.500H15.500V3.500H13|Sb M11.500 1V6",
            break: "Sw M4 3.500H.5V13.500H15.500V3.500H12|Sb M5.500 1V6M10.500 1V6",
            join: "Sw M0 8.500H4M12 8.500H16|Sb M4 8.500H12|Fb M8 8.500L4 5V12ZM8 8.500L12 5V12Z",
            chamfer: "Sw M.5 10V16M10 .5H16|Sb M2 9L9 1",
            fillet: "Sw M.5 10V16M10 .5H16|Sb M.5 9C1 4 4 1 9 .5",
            blend: "Sw M.5 16L2 9M14 7L15.500 0|Sb M2 7C4 3 6 5 8 8C10 12 12 13 14 9",
            explode: "Sw M3.500 6.500H10.500V14.500H3.500Z|Sb M.5 5V15M4 3.500L7 .5H15L12 3.500ZM12.500 6L15.500 3V11L12.500 14",
            sgrid: "Sw M4.500 0V16M8.500 0V16M12.500 0V16M0 4.500H16M0 8.500H16M0 12.500H16",
            sdots: "Fw M2 3H4V5H2ZM7 3H9V5H7ZM12 3H14V5H12ZM2 8H4V10H2ZM7 8H9V10H7ZM12 8H14V10H12ZM2 13H4V15H2ZM7 13H9V15H7ZM12 13H14V15H12Z",
            infer: "Fw M0 10H7V16H0ZM5 1H7V10H5Z|Sw M7 1.500H14.500V7.500H8.500",
            dyn: "SW M4 1V7M1 4.500H7M7 8.500H8|FW M2 10H15V14H2Z",
            ortho: "Sw M2.500 1V14.500H15M2.500 9.500H7.500V15",
            polar: "Sw M13 9A6 6 0 1 1 7 3M7 9L14 2M7 9H15|Sw M10 1L12 4",
            iso: "Tr M2 1L12 15|Sg M8 0V16|Sw M8 8L14 12",
            angle: "Sw M14 2L3 13.500H15",
            osnap: "SW M2.500 4.500H14.500V14.500H2.500Z|FW M0 2H5V7H0Z|FB M2 4H4V6H2Z",
            lwt: "Fw M0 1H16V2H0ZM0 5H16V8H0ZM0 11H12V15H0Z",
            transp: "SW M.5 .5H15.500V15.500H.5Z|FW M2 2H5V5H2ZM8 2H11V5H8ZM5 5H8V8H5ZM11 5H14V8H11ZM2 8H5V11H2ZM8 8H11V11H8ZM5 11H8V14H5ZM11 11H14V14H11Z",
            cycle: "Sw M3.500 0V5M0 3.500H8M3.500 3V9|Sw M4 5.500H12|Fg M6 6H15V16H6Z",
            osnap3: "Sw M4 5L8 1H14V8L10 12H4ZM4 5H10V12M10 5L14 1|So M.5 11.500H4.500V15.500H.5Z",
            ducs: "SW M4 2V13H14M2 4L4 1L6 4M12 11L15 13L12 15|FW M11 1L7 6H10L8 10L14 5H11Z",
            filter: "Sw M2 5L6 1H14M6 1V4M14 2V8M3 6H10|Sb M2.500 5V14H10V6M10 14L14 9",
            gizmo: "SW M8 1L14 5V11L8 15L2 11V5ZM8 8V1M8 8L14 12M8 8L2 12M5 7L8 5L11 7V10L8 11L5 10Z",
            ann1: "FW M1 15L6 2L8 2L12 15L7 12Z|SW M15 3A2 2 0 1 1 11 3A2 2 0 1 1 15 3",
            ann2: "Fw M1 15L6 2L8 2L12 15L7 12Z|FW M14 0L10 4H12L11 8L16 3H13Z",
            ann3: "Fw M2 15L7 2L9 2L14 15L8 11Z",
            gear: "Fw M7 0H9V3H7ZM7 13H9V16H7ZM0 7H3V9H0ZM13 7H16V9H13ZM2 4L4 2L6 4L4 6ZM12 2L14 4L12 6L10 4ZM2 12L4 10L6 12L4 14ZM12 10L14 12L12 14L10 12Z|Fw M13 8A5 5 0 1 1 3 8A5 5 0 1 1 13 8|Fk M10 8A2 2 0 1 1 6 8A2 2 0 1 1 10 8",
            plus: "Tw M8 0V16M0 8H16",
            qprop: "Sw M2.500 .5H13.500V15.500H2.500ZM5 4H7M8 4H12M5 8H7M8 8H12M5 12H7M8 12H12",
            lock: "Sw M7 12.500H.5V1.500H13.500V6M0 3.500H13M10 10V7H14V10|Fw M8 10H16V16H8Z",
            isolate: "Sw M1.500 1.500H7V7H1.500ZM14 8A2.500 2.500 0 1 1 9 8A2.500 2.500 0 1 1 14 8M2 15L5 10L8 15Z",
            perf: "SW M15 8A7 7 0 1 1 1 8A7 7 0 1 1 15 8M5 12L12 4",
            cad: "Fb M2 0H10L14 4V13H2Z|FW M4 4H8V6H4Z|Fy M0 9H7V15H0Z|Tg M7 11L10 14L15 8",
            full: "Sw M.5 2.500H15.500V13.500H.5ZM4 8V10.500H7M9 5.500H12V8M9 8L12 5.500M4 10.500L7 8",
            menu: "Fw M0 2H16V4H0ZM0 7H16V9H0ZM0 12H16V14H0Z"
        };

        function icon(name) {
            const parts = ICONS[name].split("|").map(function (p) {
                const c = COLORS[p[1]], d = p.slice(3);
                if (p[0] === "F") return `<path fill="${c}" d="${d}"/>`;
                return `<path fill="none" stroke="${c}" stroke-width="${p[0] === "T" ? 2 : 1.1}" d="${d}"/>`;
            });
            return `<svg class="w-4 h-4 shrink-0 overflow-visible" viewBox="0 0 16 16">${parts.join("")}</svg>`;
        }

        const arrow = '<svg class="w-[7px] h-[7px]" viewBox="0 0 8 8"><path fill="#dcdcdc" d="M0 2H8L4 6.500Z"/></svg>';
        const SIZES = {
            bar: ["w-[23px] h-[22px] flex items-center justify-center", "w-[13px] h-[22px] flex items-center justify-center"],
            qat: ["w-6 h-6 flex items-center justify-center", "w-3 h-6 flex items-center justify-center"],
            side: ["w-[22px] h-[22px] flex items-center justify-center", ""],
            status: ["w-6 h-6 flex items-center justify-center", "w-[17px] h-6 flex items-center justify-center"]
        };

        document.querySelectorAll("[data-tools]").forEach(function (el) {
            const size = SIZES[el.dataset.size || "bar"];
            el.innerHTML = el.dataset.tools.split(" ").map(function (t) {
                if (t === "|") return '<span class="w-[6px] h-[18px] self-center flex justify-center"><span class="w-0.5 h-full bg-[#dcdcdc] border-l border-black"></span></span>';
                if (t === "v") return `<button aria-label="展开" class="${size[1]}">${arrow}</button>`;
                if (t[0] === "*") return `<button aria-label="${t.slice(1)}" class="${size[0]} bg-[#5c8fc8]">${icon(t.slice(1))}</button>`;
                return `<button aria-label="${t}" class="${size[0]}">${icon(t)}</button>`;
            }).join("");
        });

        // ---- drawing ----
        const out = [];
        const line = (x1, y1, x2, y2, c, w) => out.push(`<line x1="${x1}" y1="${y1}" x2="${x2}" y2="${y2}" stroke="${c}" stroke-width="${w || 1}"/>`);
        const rect = (x1, y1, x2, y2, c, w, f) => out.push(`<rect x="${x1}" y="${y1}" width="${x2 - x1}" height="${y2 - y1}" stroke="${c}" stroke-width="${w || 1}" fill="${f || "none"}"/>`);
        const text = (x, y, s, size, c, extra) => out.push(`<text x="${x}" y="${y}" font-size="${size}" fill="${c || "#fff"}" text-anchor="middle" dominant-baseline="central" ${extra || ""}>${s}</text>`);
        const vtext = (x, y, s, size, c) => text(x, y, s, size, c, `transform="rotate(-90 ${x} ${y})"`);
        const BLUE = "#0078f0", RED = "#a80000", GREEN = "#00e000", YEL = "#ffff00", GREY = "#a8a8a8";
        const T = 6;

        // sheet frames
        rect(278, 395, 1378, 1172, "#f4f4c0", 1.2);
        rect(324.5, 413, 1359, 1153.5, YEL, 3);
        line(1211, 413, 1211, 1153, YEL, 2.5);
        [[827, 404, 827, 413], [827, 1155, 827, 1163], [315, 787, 324, 787], [1360, 783, 1369, 783]].forEach(l => line(...l, "#d8d800"));

        // grid axes
        const topAxes = [[484.5, 1], [557.5, 4], [635, 7], [715, 10], [777.5, 11], [840, 12], [920, 15], [997.5, 18], [1071, 21]];
        const bottomAxes = [[484.5, 1], [543.5, 3, -9.500], [557.5, 4], [635, 7], [708, 9], [777.5, 11], [846.5, 13], [920, 15], [997.5, 18], [1011.5, 19, 9.500], [1071, 21]];
        const rowAxes = [[538.5, "M"], [570, "L"], [617, "K"], [645, "J"], [719, "G"], [739.5, "F"], [818.5, "C", -9], [828, "B", 9.500]];
        const spans = [[484.5, 520, 855], [557.5, 520, 855], [635, 520, 855], [715, 520, 617], [708, 617, 855], [777.5, 520, 855], [840, 520, 617], [846.5, 617, 855], [920, 520, 855], [997.5, 520, 855], [1071, 520, 855], [543.5, 700, 855], [1011.5, 700, 855]];
        spans.forEach(s => line(s[0], s[1], s[0], s[2], RED));
        rowAxes.forEach(r => line(457, r[0], 1098, r[0], RED));

        function bubble(x, y, s) {
            out.push(`<circle cx="${x}" cy="${y}" r="9.500" fill="none" stroke="${BLUE}" stroke-width="1.200"/>`);
            text(x, y, s, 14, BLUE, 'font-family="Liberation Serif, serif"');
        }
        topAxes.forEach(function ([x, s]) {
            bubble(x, 457, s);
            line(x, 466.5, x, 520, BLUE); line(x, 496, x, 516, "#b8c4d0");
        });
        bottomAxes.forEach(function ([x, s, dx]) {
            bubble(x + (dx || 0), 907.5, s);
            line(x, 855, x, 898, BLUE); line(x, 860, x, 877, "#b8c4d0");
        });
        rowAxes.forEach(function ([y, s, dy]) {
            bubble(406.5, y + (dy || 0), s); bubble(1148.5, y + (dy || 0), s);
            line(416, y + (dy ? dy / 4 : 0), 420, y, BLUE); line(420, y, 457, y, BLUE); line(438, y, 452, y, "#b8c4d0");
            line(1098, y, 1135, y, BLUE); line(1135, y, 1139, y + (dy ? dy / 4 : 0), BLUE); line(1103, y, 1117, y, "#b8c4d0");
        });
        line(484, 481, 1072, 481, GREY, 1.3); line(484, 495.5, 1072, 495.5, GREY, 1.3);
        line(484, 876, 1072, 876, GREY, 1.3); line(484, 891, 1072, 891, GREY, 1.3);
        [423, 438, 1117, 1132].forEach(x => line(x, 537, x, 829, GREY, 1.3));
        topAxes.forEach(t => rect(t[0] - 1, 494.5, t[0] + 1, 496.5, "#ccc", .5));
        text(777, 476.5, "31700", T); text(777, 886.5, "31700", T);
        [3950, 4200, 4325, 3375, 3375, 4325, 4200, 3950].forEach((s, i) => text((topAxes[i][0] + topAxes[i + 1][0]) / 2, 491.5, s, T));
        [3200, 750, 4200, 3950, 3750, 3750, 3950, 4200, 750, 3200].forEach((s, i) => text((bottomAxes[i][0] + bottomAxes[i + 1][0]) / 2, 872, s, T));
        [1700, 2550, 1500, 4000, 1100, 4300, 500].forEach(function (s, i) {
            const y = (rowAxes[i][0] + rowAxes[i + 1][0]) / 2;
            vtext(434, y, s, T); vtext(1113, y, s, T);
        });
        vtext(419, 683, "15650", T); vtext(1128, 683, "15650", T);

        // green dimension strings: h at y across xs, v at x along ys
        function hdim(y, xs, from) {
            line(xs[0] - 1, y, xs[xs.length - 1] + 1, y, GREEN, 1.2);
            xs.forEach(x => { line(x, from, x, y, GREEN); rect(x - 1, y - 1, x + 1, y + 1, GREEN, .5, GREEN); });
        }
        function vdim(x, ys, from) {
            line(x, ys[0] - 1, x, ys[ys.length - 1] + 1, GREEN, 1.2);
            ys.forEach(y => { line(from, y, x, y, GREEN); rect(x - 1, y - 1, x + 1, y + 1, GREEN, .5, GREEN); });
        }

        // keep neighbouring dimension texts clear of each other
        function spread(ts) {
            const gap = 11, last = ts.length - 1, total = ts[last][0] - ts[0][0];
            if (total >= gap * last) return ts;
            const mid = (ts[last][0] + ts[0][0]) / 2;
            return ts.map((t, i) => [mid + (i - last / 2) * gap, t[1]]);
        }

        const SH = {
            barR: "-2,-2 7,-2 7,3 -2,3", barL: "-7,-2 2,-2 2,3 -7,3",
            LL: "-7.5,-2 2,-2 2,7.5 -2,7.5 -2,2 -7.5,2", LR: "-2,-2 7.5,-2 7.5,2 2,2 2,7.5 -2,7.5",
            UR: "-2,-7.5 2,-7.5 2,-2 7.5,-2 7.5,2 -2,2", UL: "-2,-7.5 2,-7.5 2,2 -7.5,2 -7.5,-2 -2,-2",
            low: "-2,7.5 2,7.5 2,15.5 -2,15.5", v: "-2.5,-2 2.5,-2 2.5,7.5 -2.5,7.5",
            w6L: "-9,-2 2,-2 2,3 -9,3", w6R: "-2,-2 9,-2 9,3 -2,3", sqR: "-2,-4.5 4.5,-4.5 4.5,2 -2,2", sqL: "-4.5,-4.5 2,-4.5 2,2 -4.5,2",
            w10L: "-12,-2 2,-2 2,2 -12,2", w10R: "-2,-2 12,-2 12,2 -2,2",
            TL: "-2,-5.5 2,-5.5 2,5.5 -2,5.5 -2,2 -9,2 -9,-2 -2,-2", TR: "-2,-5.5 2,-5.5 2,-2 9.5,-2 9.5,2 2,2 2,5.5 -2,5.5",
            TU: "-2,-8 2,-8 2,-2 5,-2 5,2 -5,2 -5,-2 -2,-2", tall: "-2.5,-11 2.5,-11 2.5,2 -2.5,2"
        };
        // x, y, shape, [dim y, text y, ticks, texts], [dim x, text x, ticks, texts], [label x, label y, label]
        const COLS = [
            [557.5, 570, "barR", [-12, -15, [-2, 0, 7.4], [[-5.5, 100], [5, 400]]], [-10.5, -14, [-2, 0, 2.8], [[-6, 100], [5.5, 150]]], [10, 6.5, "KZ2"]],
            [635, 570, "LL", [-10, -13, [-2.8, 0, 2], [[-4.5, 150], [6, 100]]], [-11.5, -15, [-2, 0, 7.4], [[-6, 100], [5.5, 400]]], [4, 11.5, "KZ17"]],
            [715, 570, "low", [23.5, 20, [-2, 0, 2], [[-6, 100], [6, 100]]], [-10.5, -14, [0, 7.8, 15.4], [[0, 425], [11, 400]]], [4.5, 4.5, "LZ4"]],
            [635, 617, "LR", [-12, -15, [-2, 0, 7.4], [[-5, 100], [5, 400]]], [-10.5, -14, [-2, 0, 7.4], [[-6, 100], [5.5, 400]]], [4, 11.5, "KZ5"]],
            [715, 617, "w6L", [-12, -15, [-9, -7, 0, 2], [[-14, 100], [-3, 375], [7, 100]]], [-18, -21.5, [-2, 0, 2.8], [[-6, 100], [5.5, 150]]], [4, 7, "KZ6"]],
            [777.5, 617, "v", [-12, -15, [-2.3, 0, 2.3], [[-6, 125], [6, 125]]], [-11, -15, [-2, 0, 7.4], [[-5, 100], [5, 400]]], [5, 11, "KZ7"]],
            [484.5, 645, "LR", [-11.5, -15, [-2, 0, 7.4], [[-5, 100], [5, 400]]], [-11, -15, [-2, 0, 7.4], [[-6, 100], [5.5, 400]]], [5, 11.5, "KZ8"]],
            [557.5, 645, "sqR", [-14, -19, [-2, 0, 4.6], [[-5.5, 100], [5.5, 250]]], [-10.5, -14, [-4.6, 0, 2], [[-6, 250], [5.5, 100]]], [7, 6, "KZ9"]],
            [484.5, 719, "UR", [12, 8, [-2, 0, 7.4], [[-6, 100], [5, 400]]], [-11, -15, [-7.4, 0, 2], [[-5, 400], [6, 100]]], [5, -17, "KZ8a"]],
            [557.5, 719, "w10L", [-11, -15, [-12, 0, 2], [[-7, 650], [6.5, 100]]], [-22, -26, [-2, 0, 2], [[-6, 100], [6, 100]]], [5, 6, "KZ10"]],
            [635, 719, "TL", [-15, -19, [-9.2, 0, 2], [[-5, 500], [5.5, 100]]], [13.5, 9.5, [-5.5, 0, 5.5], [[-4, 300], [5, 300]]], [-24, 6, "KZ11"]],
            [708, 739.5, "v", [-12, -15, [-2.8, 0, 2], [[-5, 150], [5, 100]]], [-11.5, -15.5, [-2, 0, 7.4], [[-6, 100], [4, 400]]], [5, 11, "KZ12"]],
            [777.5, 739.5, "TU", [12, 8, [-4.6, 0, 4.6], [[-5, 250], [5, 250]]], [-13, -17, [-7.4, 0, 2], [[-5, 400], [5, 100]]], [5, -17.5, "KZ4a"]],
            [708, 790, "UL", [11, 7.5, [-7.4, 0, 2], [[-5, 400], [4, 100]]], [16.5, 12, [-9, 0, 28.5], [[-3.5, 500], [15, 1500]]], [-19, -9, "LZ2"]],
            [557.5, 828, "UR", [12, 8, [-2, 0, 7.4], [[-6, 100], [5, 400]]], [-10.5, -14.5, [-7.4, 0, 2], [[-5, 400], [5, 100]]], [5, -16, "LZ1"]],
            [635, 828, "tall", [-21, -24.5, [-2.8, 0, 2], [[-5, 150], [5, 100]]], [-12, -15, [-11, -9, 0, 2], [[-15, 100], [-5, 500], [5, 100]]], [5, 6, "KZ14"]],
            [840, 570, "low", [23.5, 20, [-2, 0, 2], [[-6, 100], [6, 100]]], [-10.5, -14, [0, 7.8, 15.4], [[0, 425], [11, 400]]], [4.5, 4.5, "LZ4"]],
            [920, 570, "LR", [-10, -13, [-2, 0, 7.4], [[-5, 100], [5, 400]]], [-10, -13, [-2, 0, 7.4], [[-6, 100], [5, 400]]], [10, 5.5, "KZ3"]],
            [997.5, 570, "barL", [-12, -15, [-7.4, 0, 2], [[-5, 400], [5.5, 100]]], [-16, -19.5, [-2, 0, 2.8], [[-6, 100], [5.5, 150]]], [5, 7, "KZ2"]],
            [840, 617, "w6R", [-12, -15, [-2, 0, 7, 9], [[-7, 100], [3, 375], [14, 100]]], [-10, -14, [-2, 0, 2.8], [[-6, 100], [5.5, 150]]], [11, 7, "KZ6"]],
            [920, 617, "LL", [-12, -15, [-7.4, 0, 2], [[-5, 400], [5, 100]]], [14, 11, [-2, 0, 7.4], [[-6, 100], [5, 400]]], [-15, 11.5, "KZ5"]],
            [997.5, 645, "sqL", [-14, -18, [-4.6, 0, 2], [[-5, 250], [5.5, 100]]], [-13, -17, [-4.6, 0, 2], [[-5, 250], [6, 100]]], [5, 6, "KZ9"]],
            [1071, 645, "LL", [-12, -15, [-7.4, 0, 2], [[-4.5, 400], [5.5, 100]]], [14.5, 11, [-2, 0, 7.4], [[-5.5, 100], [5.5, 400]]], [-15, 11.5, "KZ8"]],
            [920, 719, "TR", [-15, -19, [-2, 0, 9.2], [[-5, 100], [5, 500]]], [-10, -13.5, [-5.5, 0, 5.5], [[-4, 300], [5, 300]]], [11, 6, "KZ11"]],
            [997.5, 719, "w10R", [-11, -15, [-2, 0, 12], [[-6, 100], [7, 650]]], [-10.5, -14, [-2, 0, 2], [[-5, 100], [6, 100]]], [15, 6, "KZ10"]],
            [1071, 719, "UL", [12, 8, [-7.4, 0, 2], [[-4, 400], [7, 100]]], [17.5, 14, [-7.4, 0, 2], [[-5, 400], [5, 100]]], [-17, -17.5, "KZ8a"]],
            [846.5, 739.5, "v", [-12, -15, [-2, 0, 2.8], [[-5, 100], [5, 150]]], [-10, -14, [-2, 0, 7.4], [[-6, 100], [4, 400]]], [5, 11, "KZ12"]],
            [846.5, 790, "UR", [11, 7.5, [-2, 0, 7.4], [[-4, 100], [4, 400]]], [-16, -20, [-9, 0, 28.5], [[-3.5, 500], [15, 1500]]], [10, -9, "LZ2", "#808080"]],
            [920, 828, "tall", [-21, -24.5, [-2, 0, 2.8], [[-5, 100], [5, 150]]], [-11, -14, [-11, -9, 0, 2], [[-15, 100], [-5, 500], [5, 100]]], [5, 6, "KZ14"]],
            [997.5, 828, "UL", [12, 8, [-7.4, 0, 2], [[-4, 400], [4, 100]]], [16.5, 13, [-7.4, 0, 2], [[-5, 400], [5, 100]]], [-13, -16, "LZ1", "#808080"]]
        ];
        COLS.forEach(function ([x, y, shape, h, v, l]) {
            hdim(y + h[0], h[2].map(t => x + t), y + (h[0] < 0 ? -3 : 3));
            vdim(x + v[0], v[2].map(t => y + t), x + (v[0] < 0 ? -4 : 4));
            out.push(`<polygon transform="translate(${x} ${y})" points="${SH[shape]}" fill="${l[3] || "#b03a3a"}" stroke="${l[3] || "#e8a020"}" stroke-width="1.200"/>`);
            line(x, y - 2, x, y + 2, "#d00000");
            spread(h[3]).forEach(t => text(x + t[0], y + h[1], t[1], T));
            spread(v[3]).forEach(t => vtext(x + v[1], y + t[0], t[1], T));
            const w = l[2].length * 4, lx = x + l[0], ly = y + l[1];
            text(lx + w / 2, ly, l[2], 7, BLUE);
            line(lx, ly + 3.5, lx + w, ly + 3.5, BLUE, .8);
            const sx = l[0] > 0 ? lx : lx + w;
            line(sx, ly + 3.5, sx + (l[0] > 0 ? -3 : 3), l[1] > 0 && shape !== "low" ? y + 2 : y + (shape === "low" ? 11 : -4), BLUE, .8);
        });

        // drawing title
        text(777, 938, "三层柱平面布置图", 14, "#fff", 'font-weight="bold"');
        line(713, 949, 840, 949, "#c0c0c0", 2.5); line(713, 952, 840, 952, "#888");
        text(774, 960, "标高:6.350~9.550", 8);

        // column schedule
        const yr = [986.5, 1069.5, 1084.5, 1099.5, 1114.5, 1129, 1143.5];
        yr.forEach((y, i) => line(332, y, 1203, y, "#e0e0e0", i === 0 || i === 6 ? 2 : 1.3));
        [332.5, 369.5, 619.5, 702.5, 785.5, 869.5, 1035.5, 1202.5].forEach(x => line(x, 986, x, 1144, "#f0f0f0", 1.8));
        [[471.5, 1144], [554.5, 1144], [952.5, 1129], [1119, 1129]].forEach(function ([x, end]) {
            line(x, 986, x, 1069.5, "#d8d8d8"); line(x, 1084.5, x, end, "#d8d8d8");
        });
        [["截 面", 1020], ["编 号", 1077], ["标 高", 1092], ["固定纵筋", 1107], ["分布纵筋", 1122], ["箍 筋", 1136]].forEach(r => text(351, r[1], r[0], 7, "#fff", 'font-weight="bold"'));
        [["KZ10", 514], ["KZ11", 661], ["KZ12", 744], ["KZ13", 828], ["KZ14", 952.5], ["KZ15", 1116]].forEach(r => text(r[1], 1077.5, r[0], 8));
        const cx = [419, 513, 587, 660, 743, 826, 909, 992, 1076, 1159];
        ["-0.050~6.350", "6.350~9.550", "9.550~屋顶面", "-0.050~屋顶面", "-0.050~9.550", "-0.050~6.350", "-0.050~6.350", "6.350~9.550", "-0.050~6.350", "-0.050~6.350"].forEach((s, i) => text(cx[i], 1093.5, s, T));
        ["4Φ18", "4Φ18", "4Φ16", "10Φ16", "4Φ18", "4Φ18", "4Φ18", "4Φ18", "4Φ16", "4Φ20"].forEach((s, i) => text(cx[i], 1107.5, s, T));
        ["8Φ18", "6Φ16", "2Φ16", "2Φ12", "4Φ16", "4Φ16", "6Φ16", "2Φ18+6Φ16", "4Φ16", "2Φ20+4Φ16"].forEach((s, i) => text(cx[i], 1122.5, s, T));
        [["Φ10@100", 420], ["Φ8@100", 515], ["Φ8@100", 587], ["Φ8@100", 739], ["Φ8@100", 824], ["Φ8@100", 949], ["Φ8@100", 1118]].forEach(r => text(r[1], 1138, r[0], T));
        text(653, 1133, "-0.050~9.550:Φ8@100", T); text(662, 1139.5, "9.550~屋顶面:Φ8@100/200", T);

        // reinforced sections: x1 y1 x2 y2 cells
        function section(x1, y1, x2, y2, n) {
            rect(x1, y1, x2, y2, "#e0d0d0", 1, "#f00000");
            const wide = x2 - x1 > y2 - y1, step = ((wide ? x2 - x1 : y2 - y1) - 3) / n;
            for (let i = 0; i < n; i++) {
                const a = wide ? x1 + 2.5 + i * step : x1 + 3, b = wide ? y1 + 3 : y1 + 2.5 + i * step;
                const w = wide ? step - 2.5 : x2 - x1 - 6, h = wide ? y2 - y1 - 6 : step - 2.5;
                out.push(`<rect x="${a}" y="${b}" width="${w}" height="${h}" rx="2.500" fill="#100000"/><rect x="${a}" y="${b + h / 2 - 1}" width="2" height="2" fill="#f00000"/>`);
            }
        }
        // section box, cells, horizontal dim y + text, vertical dim x + text
        [
            [391, 1028, 466.5, 1043.5, 5, 1055.5, 1000, 382.5, 200],
            [490, 1028, 546, 1043.5, 4, 1055.5, 750, 480.5, 200],
            [585.5, 1015, 600.5, 1045.5, 2, 1057, 200, 576, 400],
            [736.5, 1006.5, 755.5, 1043.5, 3, 1058.5, 250, 725.5, 500],
            [816.5, 1029.5, 853.5, 1048.5, 3, 1019, 500, 803.5, 250],
            [898.5, 999.5, 917.5, 1051.5, 4, 1066.5, 250, 888, 700],
            [982, 999.5, 1001, 1051.5, 4, 1066.5, 250, 971, 700],
            [1069.5, 1006.5, 1088.5, 1043.5, 3, 1058.5, 250, 1059, 500],
            [1152.5, 1006.5, 1171.5, 1043.5, 3, 1058.5, 250, 1142.5, 500]
        ].forEach(function ([x1, y1, x2, y2, n, hy, ht, vx, vt]) {
            section(x1, y1, x2, y2, n);
            hdim(hy, [x1, x2], hy < y1 ? y1 : hy - 9);
            vdim(vx, [y1, y2], vx + 9);
            text((x1 + x2) / 2, hy - 4, ht, T);
            vtext(vx - 3.5, (y1 + y2) / 2, vt, T);
        });
        section(645.5, 1004, 660.5, 1048.5, 3); section(660.5, 1019.5, 690.5, 1034, 2);
        vdim(632.5, [1004, 1019, 1034, 1048.5], 643); hdim(1062, [645.5, 660.5, 690.5], 1053);
        [1011.5, 1026.5, 1041].forEach(y => vtext(629, y, "200", T));
        text(653, 1058, "200", T); text(675.5, 1058, "400", T);
        text(991, 996.5, "1Φ18", T); text(991, 1056, "1Φ18", T); vtext(979, 1027, "3Φ16", T); vtext(1005, 1027, "3Φ16", T);
        text(1162, 1048, "1Φ20", T); vtext(1150, 1025, "2Φ16", T); vtext(1176, 1025, "2Φ16", T);

        // title block
        [428, 472, 487, 516.5, 531, 603.5, 618.5, 627, 690.5, 705.5, 772, 785, 828, 842.5, 857.5, 872, 886.5, 901.5, 916, 931, 946, 961, 975.5, 990.5, 1005.5, 1020, 1035, 1049.5, 1064.5, 1094.5, 1109, 1123.5, 1138.5].forEach(function (y) {
            line(1212, y, 1358, y, "#e0e000", y === 705.5 || y === 842.5 || y === 828 || y === 1049.5 || y === 1123.5 ? 1.8 : 1);
        });
        [[1248, 618.5, 690.5], [1322, 618.5, 690.5], [1266.5, 690.5, 705.5], [1266.5, 842.5, 990.5], [1303.5, 842.5, 886.5], [1248, 1005.5, 1153], [1284.5, 1005.5, 1049.5], [1284.5, 1094.5, 1153], [1322, 1005.5, 1049.5], [1322, 1094.5, 1153]].forEach(v => line(v[0], v[1], v[0], v[2], "#d0d000"));
        for (let i = 0; i < 9; i++) [1284.5, 1331.5].forEach(x => rect(x, 864 + i * 14.8, x + .5, 864.5 + i * 14.8, YEL, .6));
        [1012.5, 1027.5, 1042.5].forEach(y => [1266, 1340].forEach(x => rect(x, y, x + .5, y + .5, YEL, .6)));
        rect(1340, 1146, 1340.5, 1146.5, YEL, .6);
        text(1318, 458, "居住社区2号地块B区商品住宅、商业用房", 8, "#7fbfff", 'font-weight="bold"');
        text(1293, 1058, "01T(B4-6#,B2-20#)", 7, YEL);
        text(1303, 1080, "三层柱平面布置图", 6, YEL);
        text(1266, 1102, "TH2009Y-02", 6, YEL); text(1264, 1116.5, "2009.07", 7, YEL);
        text(1341.5, 1101, "施工图", 6, YEL); text(1341.5, 1116, "结构", 6, YEL);
        text(1231, 1146, "结构", 6, YEL); text(1267, 1147, "01T", 7, YEL); text(1304.5, 1147, "02", 7, YEL);

        // view cube
        out.push('<circle cx="1526" cy="215" r="54" fill="none" stroke="#282828" stroke-width="13"/>');
        rect(1500.5, 189.5, 1551.5, 240.5, "#707070", 1.2, "#a2a2a2");
        rect(1510, 199, 1542, 231, "none", 0, "#93959b");
        text(1526, 214, "上", 32, "#4c5058", 'font-family="Noto Sans CJK SC, sans-serif" font-weight="300"');
        [["北", 1526, 160], ["南", 1526, 273], ["西", 1469.5, 216], ["东", 1582, 216]].forEach(t => text(t[1], t[2], t[0], 18, "#a0a0a0", 'font-weight="500"'));
        out.push('<rect x="1502.500" y="302.500" width="47" height="17" rx="4" fill="#85858f" stroke="#a0a0a8"/>');
        text(1518, 310.5, "WCS", 11, "#3a3a42");
        out.push('<path d="M1537 308.500H1544L1540.500 312.500Z" fill="none" stroke="#b0b0b8"/>');

        // ucs icon
        line(61.5, 1259, 61.5, 1309.5, "#fff"); line(61.5, 1309.5, 112, 1309.5, "#fff"); rect(57.5, 1304.5, 66.5, 1313.5, "#fff");
        out.push('<path d="M63 1242L69.500 1249L76 1242M69.500 1249V1255M116 1295L129 1308M129 1295L116 1308" fill="none" stroke="#fff" stroke-width="1.200"/>');

        document.getElementById("drawing").innerHTML = out.join("");
    </script>
</body>
</html>
